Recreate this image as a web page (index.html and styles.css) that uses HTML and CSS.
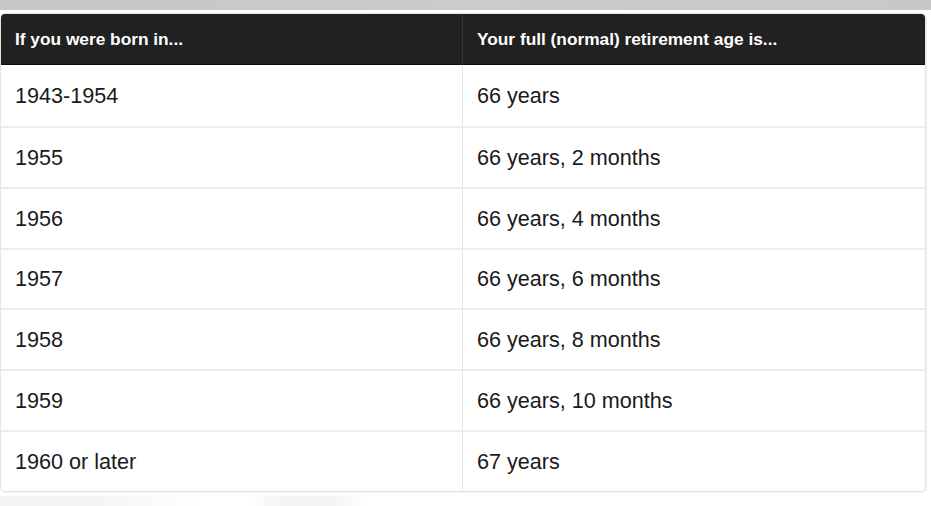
FILE: index.html
```html
<!DOCTYPE html>
<html>
<head>
<meta charset="utf-8">
<link rel="stylesheet" href="styles.css">
</head>
<body>
<div class="topbar"></div>
<div class="content">
  <div class="table">
    <div class="cell head first">If you were born in...</div>
    <div class="cell head">Your full (normal) retirement age is...</div>
    <div class="cell first top">1943-1954</div>
    <div class="cell top">66 years</div>
    <div class="cell first">1955</div>
    <div class="cell">66 years, 2 months</div>
    <div class="cell first">1956</div>
    <div class="cell">66 years, 4 months</div>
    <div class="cell first">1957</div>
    <div class="cell">66 years, 6 months</div>
    <div class="cell first">1958</div>
    <div class="cell">66 years, 8 months</div>
    <div class="cell first">1959</div>
    <div class="cell">66 years, 10 months</div>
    <div class="cell first">1960 or later</div>
    <div class="cell">67 years</div>
  </div>
  <div class="ghosts">
    <div class="ghost g1"></div>
    <div class="ghost g2"></div>
  </div>
</div>
</body>
</html>
```

FILE: styles.css
```css
html, body {
  margin: 0;
  padding: 0;
  background: #ffffff;
  font-family: "Liberation Sans", Arial, sans-serif;
  overflow: hidden;
}

.topbar {
  height: 10px;
  background: linear-gradient(to right, #c6c6c6 0%, #cbcbcb 50%, #c8c8c8 100%);
}

.content {
  padding-top: 3px;
}

.table {
  box-sizing: border-box;
  width: 926px;
  height: 479px;
  border: 1px solid #e4e4e4;
  border-radius: 5px;
  overflow: hidden;
  display: grid;
  grid-template-columns: 462px 1fr;
  grid-template-rows: 51px repeat(7, 1fr);
  box-shadow: 1px 1px 1px rgba(0,0,0,0.06);
}

.cell {
  box-sizing: border-box;
  display: flex;
  align-items: center;
  padding-left: 14px;
  padding-top: 1px;
  font-size: 21.6px;
  color: #1a1a1a;
  border-top: 2px solid #ececec;
}

.cell.top {
  border-top: 1px solid #ffffff;
}

.cell.first {
  border-right: 1px solid #e8e8e8;
}

.cell.head {
  background: #212121;
  color: #ffffff;
  font-size: 17.3px;
  font-weight: bold;
  border-top: none;
  border-bottom: 1px solid #0d0d0d;
  padding-top: 1px;
}

.cell.head.first {
  border-right: 1px solid #333333;
}

.ghosts {
  display: flex;
  gap: 40px;
  margin-top: 4px;
  height: 10px;
}

.ghost {
  height: 10px;
}

.g1 {
  width: 205px;
  background: linear-gradient(to right, #f3f3f3 0%, #f5f5f5 50%, rgba(255,255,255,0) 100%);
}

.g2 {
  width: 125px;
  background: linear-gradient(to right, rgba(255,255,255,0) 0%, #f5f5f5 25%, #f5f5f5 70%, rgba(255,255,255,0) 100%);
}
```
